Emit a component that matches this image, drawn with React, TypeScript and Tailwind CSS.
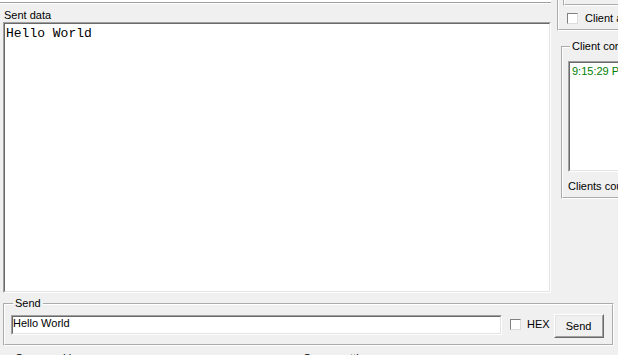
import React from 'react';

const groove = "[--tw-border-style:groove] [border-style:groove] border-white";

const Sunken: React.FC<{ className?: string; children?: React.ReactNode }> = ({ className, children }) => (
    <div className={"shrink-0 border border-t-[#a0a0a0] border-l-[#a0a0a0] border-b-white border-r-white " + (className ?? "")}>
        <div className="h-full overflow-hidden bg-white border border-t-[#696969] border-l-[#696969] border-b-[#e3e3e3] border-r-[#e3e3e3]">
            {children}
        </div>
    </div>
);

const Check: React.FC = () => (
    <div className="w-[11px] h-[11px] shrink-0 bg-white border border-t-[#808080] border-l-[#808080] border-b-[#dcdcdc] border-r-[#dcdcdc]" />
);

const App: React.FC = () => {
    return (
        <div className="w-[618px] h-[355px] overflow-hidden bg-[#f0f0f0] text-[11px] leading-[13px] text-black font-['Liberation_Sans',Arial,sans-serif] flex flex-col">
            <div className="flex h-[297px] shrink-0">
                {/* sent data */}
                <div className="w-[551px] shrink-0 flex flex-col">
                    <div className="h-[2px] bg-white" />
                    <div className="h-px bg-[#a0a0a0]" />
                    <div className="h-px bg-white" />
                    <div className="mt-[5px] ml-[4px] h-[13px]">Sent data</div>
                    <Sunken className="ml-[3px] w-[548px] h-[271px]">
                        <div className="px-px pt-[2px] font-['Liberation_Mono','Courier_New',monospace] text-[13px] leading-[15px] whitespace-pre">Hello World</div>
                    </Sunken>
                </div>

                {/* right side */}
                <div className="flex-1 min-w-0 flex flex-col overflow-hidden">
                    <div className={"ml-[6px] w-[120px] h-[31px] shrink-0 border-l-2 border-b-2 " + groove}>
                        <div className={"ml-[4px] h-[6px] border-l-2 border-b-2 " + groove} />
                        <div className="mt-[6px] ml-[8px] h-[13px] flex items-center gap-[7px] whitespace-nowrap">
                            <Check />
                            <span>Client auto-close</span>
                        </div>
                    </div>

                    <fieldset className={"mt-[9px] ml-[10px] w-[140px] shrink-0 border-2 pl-[5px] pb-[4px] " + groove}>
                        <legend className="ml-[2px] px-[2px] whitespace-nowrap">Client connections</legend>
                        <Sunken className="mt-[8px] w-[120px] h-[111px]">
                            <div className="pl-[2px] pt-[2px] text-[#008000] whitespace-nowrap">9:15:29 PM 127.0.0.1:52144</div>
                        </Sunken>
                        <div className="mt-[8px] whitespace-nowrap">Clients count: 1</div>
                    </fieldset>
                </div>
            </div>

            {/* send */}
            <fieldset className={"ml-[3px] w-[611px] h-[49px] shrink-0 border-2 " + groove}>
                <legend className="ml-[8px] px-[2px]">Send</legend>
                <div className="flex items-start pl-[6px]">
                    <Sunken className="mt-[5px] w-[491px] h-[20px]">
                        <div className="whitespace-pre">Hello World</div>
                    </Sunken>
                    <div className="ml-[8px] mt-[8px] h-[13px] flex items-center gap-[6px]">
                        <Check />
                        <span>HEX</span>
                    </div>
                    <button className="ml-[4px] mt-[4px] w-[50px] h-[24px] shrink-0 bg-[#f0f0f0] border border-t-white border-l-white border-b-[#696969] border-r-[#696969]">
                        <div className="h-full flex items-center justify-center border border-t-[#e3e3e3] border-l-[#e3e3e3] border-b-[#a0a0a0] border-r-[#a0a0a0]">
                            Send
                        </div>
                    </button>
                </div>
            </fieldset>

            <div className="mt-[6px] flex whitespace-nowrap">
                <span className="ml-[15px] w-[288px]">Command log</span>
                <span>Comm settings</span>
            </div>
        </div>
    );
};

export default App;
